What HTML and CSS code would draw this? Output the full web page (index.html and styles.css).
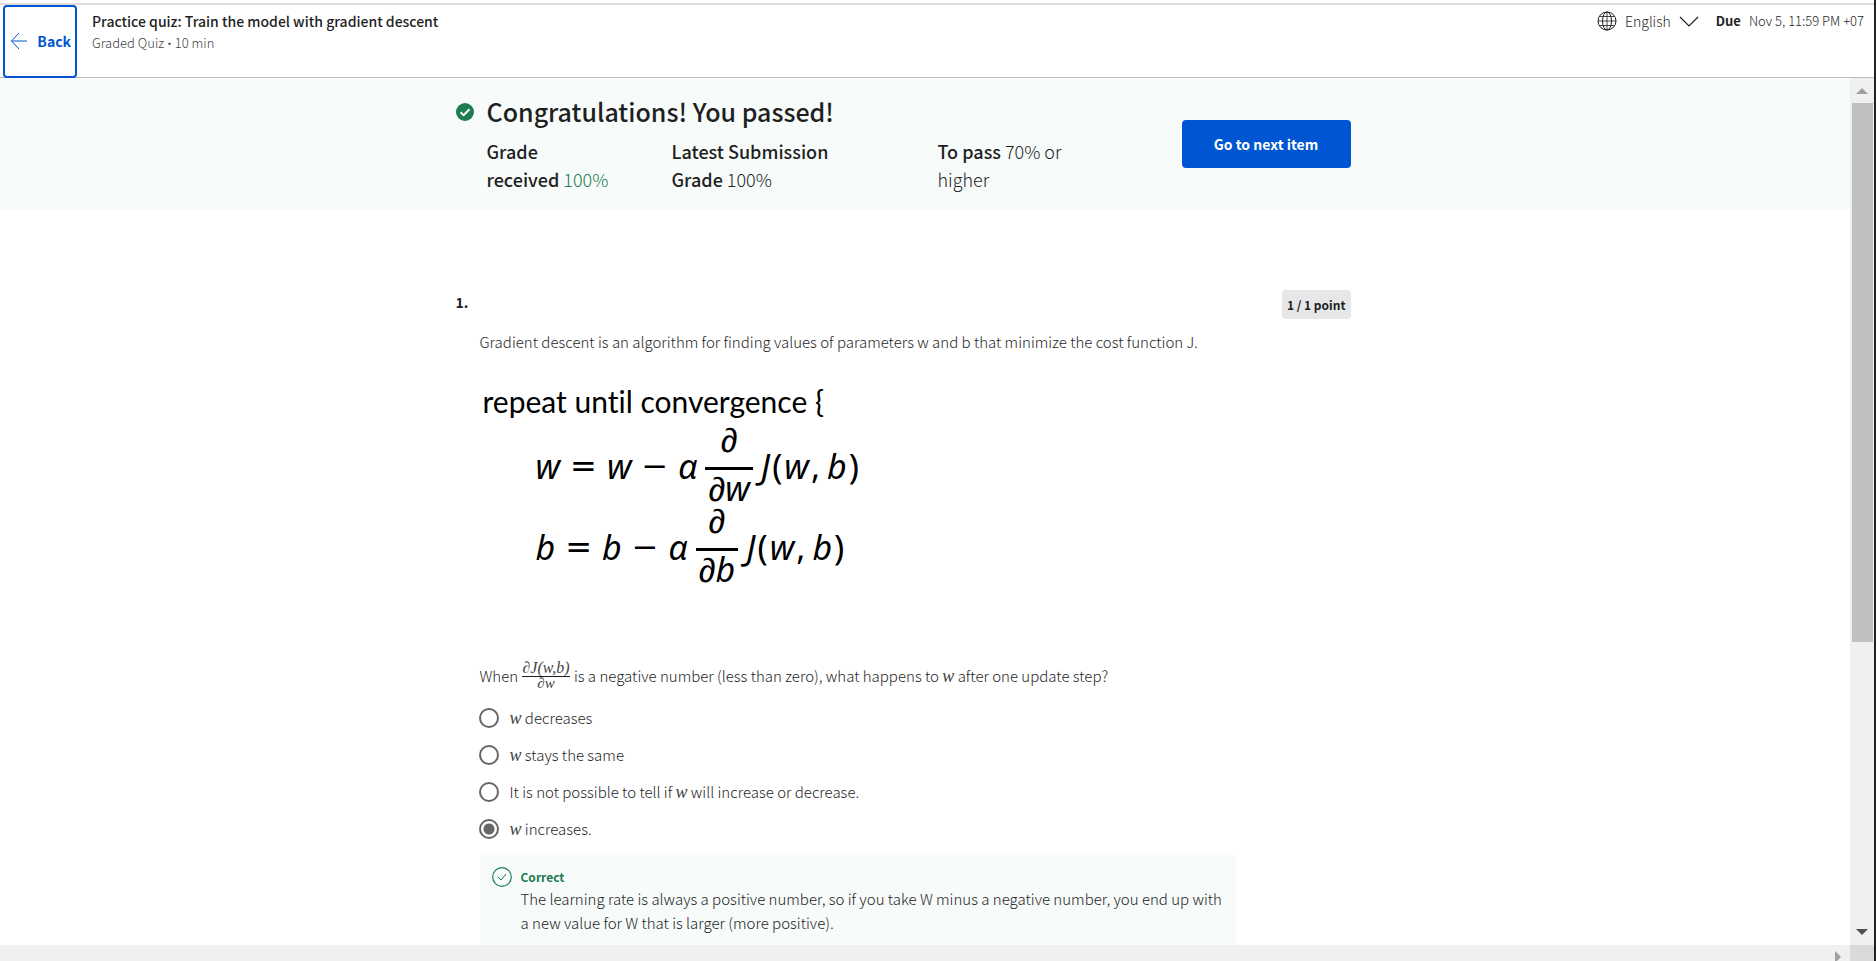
FILE: index.html
```html
<!DOCTYPE html>
<html lang="en">
<head>
<meta charset="utf-8">
<title>Practice quiz: Train the model with gradient descent</title>
<link rel="stylesheet" href="styles.css">
</head>
<body>
<div class="app">
  <header class="topbar">
    <button class="back" type="button">
      <svg width="18" height="18" viewBox="0 0 18 18" fill="none" stroke="currentColor"><path d="M9 1L1.500 9L9 17M1.500 9H17"/></svg>
      <span>Back</span>
    </button>
    <div class="heading">
      <h1 class="quiz-title">Practice quiz: Train the model with gradient descent</h1>
      <p class="quiz-meta">Graded Quiz <span class="dot">•</span> 10 min</p>
    </div>
    <div class="tools">
      <button class="language" type="button">
        <svg width="20" height="20" viewBox="0 0 20 20" fill="none" stroke="currentColor"><circle cx="10" cy="10" r="9"/><ellipse cx="10" cy="10" rx="4.500" ry="9"/><path stroke-width="0.800" d="M10 1V19M1 10H19M2.500 5.500H17.500M2.500 14.500H17.500"/></svg>
        <span>English</span>
        <svg width="20" height="20" viewBox="0 0 20 20" fill="none" stroke="currentColor" stroke-width="1.200"><path d="M1 6L10 15L19 6"/></svg>
      </button>
      <p class="due"><strong>Due</strong><span>Nov 5, 11:59 PM +07</span></p>
    </div>
  </header>

  <div class="viewport">
    <main class="page">
      <section class="banner">
        <div class="column banner-row">
          <svg class="pass-icon" width="18" height="18" viewBox="0 0 18 18"><circle cx="9" cy="9" r="9" fill="#1d7c50"/><path d="M4.500 9.200L7.600 12.200L13.500 6.200" fill="none" stroke="#fff" stroke-width="2"/></svg>
          <div class="result">
            <h2 class="result-title">Congratulations! You passed!</h2>
            <div class="grades">
              <p><strong>Grade received</strong>&nbsp;<span class="green">100%</span></p>
              <p><strong>Latest Submission Grade</strong> 100%</p>
              <p><strong>To pass</strong> 70% or higher</p>
            </div>
          </div>
          <button class="next" type="button">Go to next item</button>
        </div>
      </section>

      <section class="column question">
        <div class="question-head">
          <h3 class="number">1.</h3>
          <span class="points">1 / 1 point</span>
        </div>
        <div class="question-body">
          <p class="prompt">Gradient descent is an algorithm for finding values of parameters w and b that minimize the cost function J.</p>
          <div class="algorithm">
            <p class="repeat">repeat until convergence {</p>
            <div class="equation">
              <i>w</i><span class="op">=</span><i>w</i><span class="op">−</span><i>α</i>
              <span class="frac"><i>∂</i><i class="under">∂w</i></span>
              <span class="call"><i>J</i><span>(</span><i>w</i><span>,</span><i class="arg">b</i><span>)</span></span>
            </div>
            <div class="equation">
              <i>b</i><span class="op">=</span><i>b</i><span class="op">−</span><i>α</i>
              <span class="frac"><i>∂</i><i class="under">∂b</i></span>
              <span class="call"><i>J</i><span>(</span><i>w</i><span>,</span><i class="arg">b</i><span>)</span></span>
            </div>
          </div>
          <fieldset class="answers">
            <legend class="ask">When <span class="small-frac"><i>∂J(w,b)</i><i class="under">∂w</i></span> is a negative number (less than zero), what happens to <i class="var">w</i> after one update step?</legend>
            <label class="option"><input type="radio" name="answer"><span><i class="var">w</i> decreases</span></label>
            <label class="option"><input type="radio" name="answer"><span><i class="var">w</i> stays the same</span></label>
            <label class="option"><input type="radio" name="answer"><span>It is not possible to tell if <i class="var">w</i> will increase or decrease.</span></label>
            <label class="option"><input type="radio" name="answer" checked><span><i class="var">w</i> increases.</span></label>
          </fieldset>
          <div class="feedback">
            <svg width="20" height="20" viewBox="0 0 20 20" fill="none" stroke="#1d7c50"><circle cx="10" cy="10" r="9.300" stroke-width="1.200"/><path d="M6 10L9 13L14 7"/></svg>
            <div>
              <p class="verdict">Correct</p>
              <p class="explain">The learning rate is always a positive number, so if you take W minus a negative number, you end up with a new value for W that is larger (more positive).</p>
            </div>
          </div>
        </div>
      </section>
    </main>
    <div class="vbar">
      <svg width="12" height="6" viewBox="0 0 12 6"><path d="M0 6L6 0L12 6Z" fill="#a0a0a0"/></svg>
      <div class="track"><div class="thumb"></div></div>
      <svg width="12" height="6" viewBox="0 0 12 6"><path d="M0 0H12L6 6Z" fill="#505050"/></svg>
    </div>
  </div>
  <div class="hbar">
    <div class="htrack"><svg width="6" height="12" viewBox="0 0 6 12"><path d="M0 0L6 6L0 12Z" fill="#a0a0a0"/></svg></div>
    <div class="corner"></div>
  </div>
</div>
</body>
</html>
```
FILE: styles.css
```css
* { box-sizing: border-box; }
body {
  margin: 0;
  font-family: "Noto Sans CJK SC", "Noto Sans", sans-serif;
  font-size: 15px;
  font-weight: 300;
  line-height: 24px;
  color: #1f1f1f;
  background: #fff;
}
h1, h2, h3, p { margin: 0; }
button { font: inherit; cursor: pointer; }
svg { flex: none; display: block; }

.app {
  display: flex;
  flex-direction: column;
  height: 100vh;
  overflow: hidden;
  border-right: 2px solid #222;
}

.topbar {
  display: flex;
  flex: none;
  align-items: flex-start;
  margin-top: 3px;
  border-top: 2px solid #ddd;
  border-bottom: 1px solid #bdbdbd;
  height: 75px;
}
.back {
  display: flex;
  align-items: center;
  justify-content: space-between;
  flex: none;
  width: 74px;
  height: 73px;
  margin-left: 3px;
  padding: 0 4px 2px 5px;
  border: 2px solid #0056d2;
  border-radius: 4px;
  background: #fff;
  color: #0056d2;
  font-size: 14px;
  font-weight: 700;
}
.heading { flex: 1; padding: 5px 0 0 15px; }
.quiz-title { font-size: 14px; line-height: 22px; font-weight: 500; }
.quiz-meta { font-size: 13px; line-height: 22px; color: #444; }
.dot { font-family: "Noto Sans", sans-serif; }
.tools { display: flex; gap: 17px; padding: 4px 10px 0 0; }
.language {
  display: flex;
  align-items: center;
  gap: 8px;
  padding: 0;
  border: 0;
  background: none;
  color: #1f1f1f;
  font-size: 14px;
}
.due { display: flex; gap: 8px; font-size: 13px; line-height: 24px; }
.due strong { font-weight: 700; }

.viewport { display: flex; flex: 1; min-height: 0; }
.page { flex: 1; min-width: 0; overflow: hidden; }
.column { width: 895px; max-width: 100%; margin: 0 auto; position: relative; right: 22px; }

.banner { background: #f7fbfa; padding: 15px 0 17px; }
.banner-row { display: flex; align-items: flex-start; }
.pass-icon { margin: 10px 13px 0 0; }
.result { flex: 1; }
.result-title { font-size: 25px; line-height: 36px; font-weight: 500; }
.grades {
  display: grid;
  grid-template-columns: 130px 180px 165px;
  column-gap: 55px;
  margin-top: 8px;
  font-size: 18px;
  line-height: 28px;
}
.grades p:last-child { margin-left: 31px; }
.grades strong { font-weight: 500; }
.green { color: #1d7c50; }
.next {
  flex: none;
  width: 169px;
  height: 48px;
  margin-top: 27px;
  border: 0;
  border-radius: 4px;
  background: #0056d2;
  color: #fff;
  font-size: 14px;
  font-weight: 700;
}

.question { padding-top: 80px; }
.question-head { display: flex; justify-content: space-between; align-items: flex-start; }
.number { font-size: 14px; font-weight: 700; }
.points {
  padding: 0 5px;
  border-radius: 4px;
  background: #e5e7e8;
  font-size: 12px;
  line-height: 29px;
  font-weight: 700;
}
.question-body { padding: 11px 0 0 24px; }

.algorithm { margin-top: 23px; padding-left: 3px; color: #000; font-weight: 400; }
.repeat {
  font-family: Lato, sans-serif;
  font-size: 30px;
  line-height: 48px;
  font-variant-ligatures: none;
}
.equation {
  display: flex;
  align-items: center;
  height: 81px;
  padding-left: 53px;
  font-family: "Noto Sans", sans-serif;
  font-size: 34px;
  line-height: 40px;
}
.op { padding: 0 10px; font-family: "DejaVu Sans", sans-serif; font-size: 32px; }
.frac { display: flex; flex-direction: column; align-items: center; margin: 0 0 4px 8px; }
.frac i { line-height: 36px; padding-bottom: 10px; }
.frac .under { padding: 0 3px; border-top: 3px solid #000; }
.call { display: flex; gap: 2px; padding-left: 8px; }
.arg { padding-left: 5px; }

.answers { margin: 68px 0 0; padding: 0; border: 0; }
.ask { padding: 0 0 2px; line-height: 42px; }
.var { font-family: "Liberation Serif", serif; font-size: 18px; line-height: 20px; color: #444; }
.small-frac {
  display: inline-flex;
  flex-direction: column;
  align-items: center;
  vertical-align: middle;
  margin: 0 1px 6px;
  font-family: "Liberation Serif", serif;
  font-size: 16px;
  color: #444;
}
.small-frac i { line-height: 16px; }
.small-frac .under { align-self: stretch; border-top: 1px solid #1f1f1f; text-align: center; font-size: 15px; line-height: 13px; }
.option { display: flex; align-items: center; gap: 11px; height: 37px; margin-left: -1px; }
.option input {
  appearance: none;
  flex: none;
  width: 20px;
  height: 20px;
  margin: 0;
  border: 2px solid #666;
  border-radius: 50%;
}
.option input:checked { background: radial-gradient(circle, #666 5px, transparent 6px); }

.feedback {
  display: flex;
  gap: 9px;
  width: 756px;
  max-width: 100%;
  margin-top: 8px;
  padding: 12px 12px 24px;
  background: #f7fbfa;
}
.verdict { font-size: 12px; line-height: 20px; font-weight: 700; color: #1d7c50; }

.vbar {
  display: flex;
  flex: none;
  flex-direction: column;
  align-items: center;
  width: 24px;
  padding: 10px 0;
  background: #f0f0f0;
}
.track { flex: 1; align-self: stretch; margin: 9px 1px 9px 2px; }
.thumb { height: 66%; background: #c0c0c0; }
.hbar { display: flex; flex: none; height: 16px; overflow: hidden; }
.htrack { display: flex; flex: 1; justify-content: flex-end; padding: 6px 9px 0 0; background: #f0f0f0; }
.corner { width: 24px; background: #dadada; }
```
